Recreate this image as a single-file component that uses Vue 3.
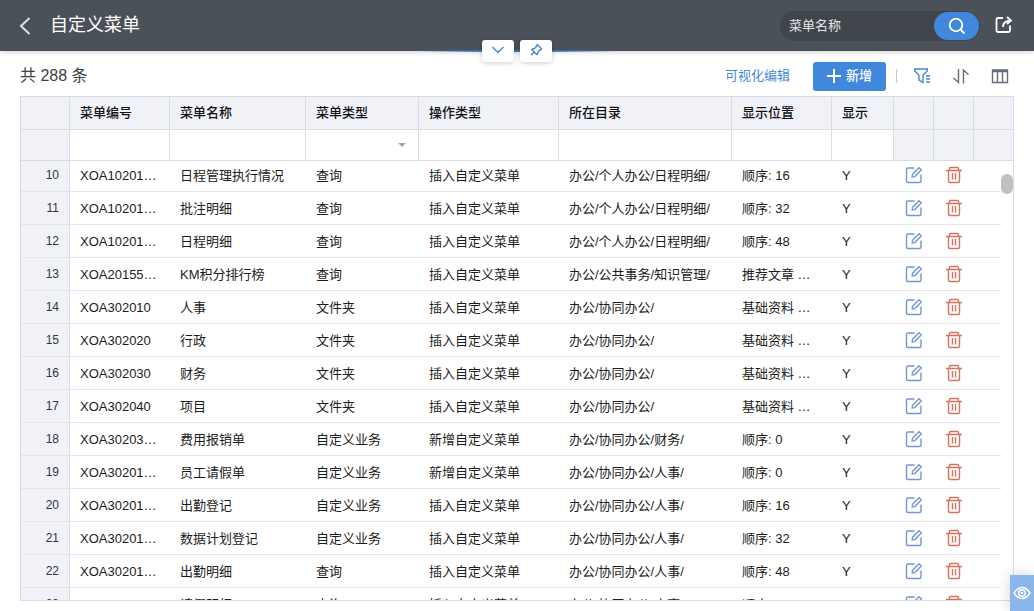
<script setup>
const columns = [
  { key: 'code', label: '菜单编号' },
  { key: 'name', label: '菜单名称' },
  { key: 'type', label: '菜单类型' },
  { key: 'op', label: '操作类型' },
  { key: 'dir', label: '所在目录' },
  { key: 'pos', label: '显示位置' },
  { key: 'show', label: '显示' },
]

const rows = [
  [10, 'XOA10201…', '日程管理执行情况', '查询', '插入自定义菜单', '办公/个人办公/日程明细/', '顺序: 16'],
  [11, 'XOA10201…', '批注明细', '查询', '插入自定义菜单', '办公/个人办公/日程明细/', '顺序: 32'],
  [12, 'XOA10201…', '日程明细', '查询', '插入自定义菜单', '办公/个人办公/日程明细/', '顺序: 48'],
  [13, 'XOA20155…', 'KM积分排行榜', '查询', '插入自定义菜单', '办公/公共事务/知识管理/', '推荐文章 …'],
  [14, 'XOA302010', '人事', '文件夹', '插入自定义菜单', '办公/协同办公/', '基础资料 …'],
  [15, 'XOA302020', '行政', '文件夹', '插入自定义菜单', '办公/协同办公/', '基础资料 …'],
  [16, 'XOA302030', '财务', '文件夹', '插入自定义菜单', '办公/协同办公/', '基础资料 …'],
  [17, 'XOA302040', '项目', '文件夹', '插入自定义菜单', '办公/协同办公/', '基础资料 …'],
  [18, 'XOA30203…', '费用报销单', '自定义业务', '新增自定义菜单', '办公/协同办公/财务/', '顺序: 0'],
  [19, 'XOA30201…', '员工请假单', '自定义业务', '新增自定义菜单', '办公/协同办公/人事/', '顺序: 0'],
  [20, 'XOA30201…', '出勤登记', '自定义业务', '插入自定义菜单', '办公/协同办公/人事/', '顺序: 16'],
  [21, 'XOA30201…', '数据计划登记', '自定义业务', '插入自定义菜单', '办公/协同办公/人事/', '顺序: 32'],
  [22, 'XOA30201…', '出勤明细', '查询', '插入自定义菜单', '办公/协同办公/人事/', '顺序: 48'],
  [23, 'XOA30201…', '请假明细', '查询', '插入自定义菜单', '办公/协同办公/人事/', '顺序: 64'],
].map(([no, code, name, type, op, dir, pos]) => ({ no, code, name, type, op, dir, pos, show: 'Y' }))
</script>

<template>
  <div class="page">
    <header class="topbar">
      <button class="icon-btn back" type="button" aria-label="返回">
        <svg width="14" height="20" viewBox="0 0 14 20"><path d="M11.500 2L3 10L11.500 18" /></svg>
      </button>
      <h1>自定义菜单</h1>
      <form class="search" @submit.prevent>
        <input type="text" placeholder="菜单名称" aria-label="菜单名称" />
        <button type="submit" aria-label="搜索">
          <svg width="18" height="18" viewBox="0 0 18 18"><circle cx="8" cy="8" r="6.300" /><path d="M12.500 12.500L16.500 16.500" /></svg>
        </button>
      </form>
      <button class="icon-btn share" type="button" aria-label="新窗口打开">
        <svg width="18" height="18" viewBox="0 0 18 18"><path d="M8 2H3Q1.500 2 1.500 3.500V14.500Q1.500 16 3 16H13.500Q15 16 15 14.500V9.500M8 11Q8 5 15.500 4.500M12 1L16 4.500L12 8" /></svg>
      </button>
      <div class="glow"></div>
      <div class="tabs">
        <button type="button" aria-label="展开">
          <svg width="14" height="14" viewBox="0 0 14 14"><path d="M1.500 4L7 9.500L12.500 4" /></svg>
        </button>
        <button type="button" aria-label="固定">
          <svg width="14" height="14" viewBox="0 0 14 14"><path d="M8.500 1.800L12.500 5.800L11.500 7.200L10.800 7L8.800 9L8.500 11L7.800 11.500L2.800 6.500L3.500 5.800L5.500 5.500L7.500 3.500L7.300 2.800ZM5.200 9L2 12.200" /></svg>
        </button>
      </div>
    </header>

    <section class="toolbar">
      <p>共 288 条</p>
      <a href="#">可视化编辑</a>
      <button class="add" type="button">
        <svg width="14" height="14" viewBox="0 0 14 14"><path d="M7 0V14M0 7H14" /></svg>新增
      </button>
      <i class="divider"></i>
      <div class="tools">
        <button class="icon-btn filter" type="button" aria-label="筛选">
          <svg width="18" height="18" viewBox="0 0 18 18"><path d="M1.700 2H14.300V3.800L10 8.300V15.500L6 13V8.300L1.700 3.800ZM13 9H17M13 12H17M13 15H17" /></svg>
        </button>
        <button class="icon-btn" type="button" aria-label="排序">
          <svg width="18" height="18" viewBox="0 0 18 18"><path d="M6.500 2V15.500L1.500 11M11.500 16.500V3L16.500 7.500" /></svg>
        </button>
        <button class="icon-btn" type="button" aria-label="列设置">
          <svg width="18" height="18" viewBox="0 0 18 18"><path d="M1.500 3H16.500V15.500H1.500ZM1.500 4.500H16.500M6.500 4.500V15.500M11.500 4.500V15.500" /></svg>
        </button>
      </div>
    </section>

    <main class="grid">
      <table class="head">
        <colgroup>
          <col class="c-no" /><col v-for="c in columns" :key="c.key" :class="'c-' + c.key" />
          <col class="c-act" /><col class="c-act" /><col class="c-last" />
        </colgroup>
        <thead>
          <tr class="labels">
            <th></th>
            <th v-for="c in columns" :key="c.key" scope="col">{{ c.label }}</th>
            <th></th><th></th><th></th>
          </tr>
          <tr class="filters">
            <td class="shade"></td>
            <td v-for="c in columns" :key="c.key">
              <div v-if="c.key === 'type'" class="select">
                <select :aria-label="c.label"><option></option></select>
                <svg width="8" height="4" viewBox="0 0 8 4"><path d="M0 0H8L4 4Z" /></svg>
              </div>
              <input v-else type="text" :aria-label="c.label" />
            </td>
            <td class="shade"></td><td class="shade"></td><td class="shade"></td>
          </tr>
        </thead>
      </table>
      <div class="viewport">
        <table class="body">
          <colgroup>
            <col class="c-no" /><col v-for="c in columns" :key="c.key" :class="'c-' + c.key" />
            <col class="c-act" /><col class="c-act" /><col class="c-end" />
          </colgroup>
          <tbody>
            <tr v-for="r in rows" :key="r.no">
              <th scope="row">{{ r.no }}</th>
              <td v-for="c in columns" :key="c.key">{{ r[c.key] }}</td>
              <td class="act">
                <button class="icon-btn edit" type="button" aria-label="编辑">
                  <svg width="18" height="18" viewBox="0 0 18 18"><path d="M9.500 2H3Q1.500 2 1.500 3.500V15Q1.500 16.500 3 16.500H14.500Q16 16.500 16 15V8.500M7.500 8.300L14 1.800L16.300 4.100L9.800 10.600L7.200 11Z" /></svg>
                </button>
              </td>
              <td class="act">
                <button class="icon-btn del" type="button" aria-label="删除">
                  <svg width="18" height="18" viewBox="0 0 18 18"><path d="M1 4.500H17M4.500 4.500V2.500Q4.500 1.500 5.500 1.500H12.500Q13.500 1.500 13.500 2.500V4.500M3.500 4.500V15Q3.500 16.500 5 16.500H13Q14.500 16.500 14.500 15V4.500M7.500 7V13.500M10.500 7V13.500" /></svg>
                </button>
              </td>
              <td></td>
            </tr>
          </tbody>
        </table>
        <div class="thumb"></div>
      </div>
    </main>

    <button class="preview" type="button" aria-label="预览">
      <svg width="18" height="14" viewBox="0 0 18 14"><path d="M1 7Q4.500 1.500 9 1.500T17 7Q13.500 12.500 9 12.500T1 7Z" /><circle cx="9" cy="7" r="3.300" /><circle class="dot" cx="9" cy="7" r="1.300" /></svg>
    </button>
  </div>
</template>

<style>
body { margin: 0; }
</style>

<style scoped>
* { box-sizing: border-box; }
.page {
  display: flex;
  flex-direction: column;
  height: 100vh;
  padding-bottom: 10px;
  overflow: hidden;
  background: #fff;
  color: #1b1c20;
  font: 13px/18px "Liberation Sans", "Noto Sans CJK SC", sans-serif;
}
button, input, select { font: inherit; border: 0; padding: 0; margin: 0; outline: 0; }
button { cursor: pointer; }
svg { display: block; fill: none; stroke: currentColor; stroke-width: 1.400; }
.icon-btn { background: none; color: inherit; }

.topbar {
  position: relative;
  display: flex;
  align-items: center;
  flex: none;
  height: 51px;
  padding: 0 21px 0 18px;
  background: #4a5158;
  color: #fff;
  box-shadow: 0 1px 5px rgba(0, 0, 0, .2);
}
.back svg { stroke: #dfe1e3; stroke-width: 2; }
h1 { flex: 1; margin: 0 0 0 18px; padding-bottom: 2px; font-size: 18px; line-height: 26px; font-weight: 400; }
.search {
  display: flex;
  align-items: center;
  width: 200px;
  height: 30px;
  padding-right: 1px;
  border-radius: 15px;
  background: #3f454b;
}
.search input { flex: 1; min-width: 0; padding-left: 9px; background: none; color: #fff; }
.search input::placeholder { color: #e4e5e6; opacity: 1; }
.search button {
  display: grid;
  place-items: center;
  width: 45px;
  height: 28px;
  border-radius: 14px;
  background: #4088dc;
  color: #fff;
}
.search svg { stroke-width: 1.800; }
.share { margin-left: 15px; padding-bottom: 2px; }
.share svg { stroke-width: 1.800; }
.glow {
  position: absolute;
  bottom: -1px;
  left: 50%;
  width: 200px;
  height: 2px;
  transform: translateX(-50%);
  background: linear-gradient(90deg, transparent, #3b73c0 35%, #3b73c0 65%, transparent);
}
.tabs {
  position: absolute;
  top: 40px;
  left: 50%;
  display: flex;
  gap: 6px;
  transform: translateX(-50%);
}
.tabs button {
  display: grid;
  place-items: center;
  width: 32px;
  height: 22px;
  padding-bottom: 2px;
  border-radius: 3px;
  background: #fff;
  color: #4686d6;
  box-shadow: 0 1px 5px rgba(0, 0, 0, .2);
}

.toolbar { display: flex; align-items: center; flex: none; height: 45px; padding: 5px 25px 0 20px; }
.toolbar p { flex: 1; margin: 0; color: #3c3f44; font-size: 16px; line-height: 24px; }
.toolbar a { color: #4686d6; text-decoration: none; }
.add {
  display: flex;
  align-items: center;
  justify-content: center;
  gap: 5px;
  width: 73px;
  height: 29px;
  margin-left: 23px;
  border-radius: 3px;
  background: #4088dc;
  color: #fff;
  font-weight: 500;
}
.add svg { stroke-width: 2; }
.divider { width: 1px; height: 14px; margin: 0 16px 0 10px; background: #c8cacf; }
.tools { display: flex; gap: 21px; color: #666c7a; }
.filter { color: #4686d6; }

.grid {
  display: flex;
  flex-direction: column;
  flex: 1;
  min-height: 0;
  margin: 0 20px;
  border: 1px solid #dadce3;
}
table { table-layout: fixed; border-collapse: separate; border-spacing: 0; }
.head { flex: none; width: 100%; }
.c-no { width: 49px; }
.c-code { width: 100px; }
.c-name { width: 136px; }
.c-type { width: 113px; }
.c-op { width: 140px; }
.c-pos { width: 100px; }
.c-show { width: 62px; }
.c-act { width: 40px; }
.c-last { width: 39px; }
.c-end { width: 27px; }
th, td { padding: 0 10px; text-align: left; white-space: nowrap; overflow: hidden; }
.head th, .head td { border-right: 1px solid #dadce3; border-bottom: 1px solid #dadce3; }
.head th:last-child, .head td:last-child { border-right: 0; }
.head th { height: 33px; background: #f1f2f7; font-weight: 500; color: #101115; }
.head td { height: 31px; padding: 0; }
.head .shade { background: #f1f2f7; }
.head input, .head select { display: block; width: 100%; height: 30px; padding: 0 10px; background: none; appearance: none; }
.select { position: relative; }
.select svg { position: absolute; top: 13px; right: 12px; fill: #a2a4a8; stroke: none; pointer-events: none; }

.viewport { position: relative; flex: 1; min-height: 0; overflow: hidden; }
/* the list is scrolled slightly into its first visible row */
.body { width: calc(100% - 12px); margin-top: -2px; }
.body th, .body td { height: 33px; border-bottom: 1px solid #e4e5ea; }
.body td { padding-top: 1px; }
.body th {
  border-right: 1px solid #dadce3;
  background: #f1f2f7;
  color: #33353b;
  font-size: 12px;
  font-weight: 400;
  text-align: right;
}
.body .act { padding: 0; }
.act button { display: block; margin: 0 auto; }
.edit { color: #7296d3; }
.del { color: #d9715f; }
.thumb {
  position: absolute;
  top: 13px;
  right: 0;
  width: 12px;
  height: 20px;
  border-radius: 6px;
  background: #c0c0c0;
}
.preview {
  position: absolute;
  right: 0;
  bottom: 0;
  display: grid;
  place-items: center;
  width: 24px;
  height: 36px;
  background: #8bb6eb;
  color: #fff;
  box-shadow: 0 0 14px rgba(0, 0, 0, .18);
}
.preview svg { stroke-width: 1.500; }
.dot { fill: currentColor; stroke: none; }
</style>
